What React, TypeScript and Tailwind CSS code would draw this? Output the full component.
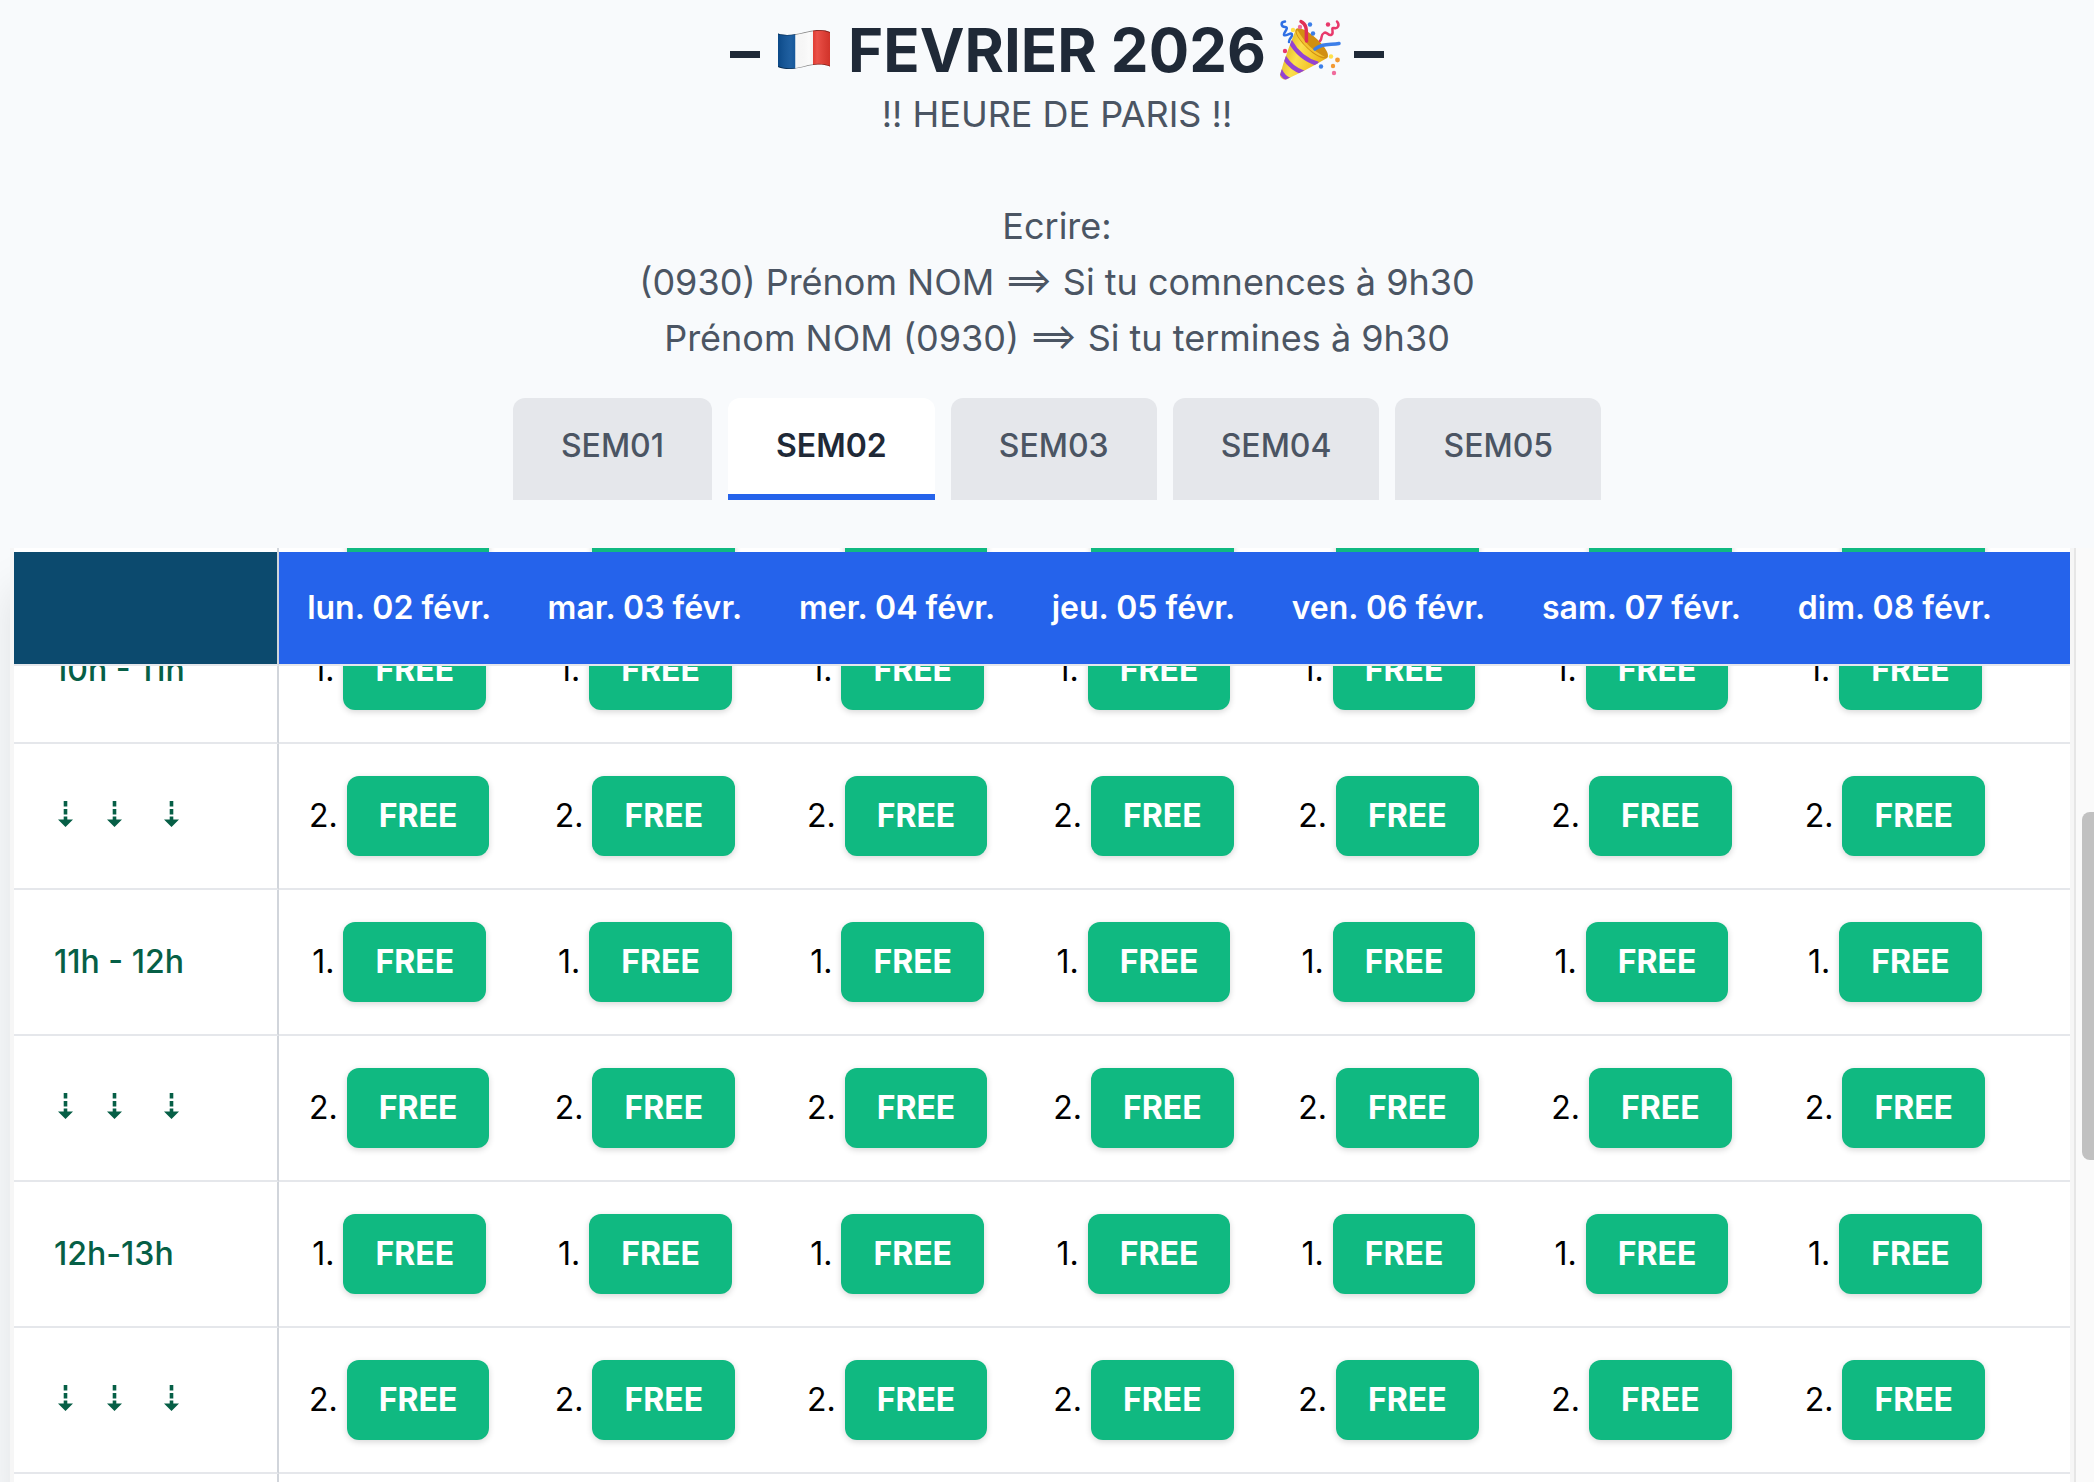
import React, { useLayoutEffect, useRef, useState } from 'react';
import { clsx } from 'clsx';

const WEEKS = ['SEM01', 'SEM02', 'SEM03', 'SEM04', 'SEM05'];

const DAYS = [
    'lun. 02 févr.',
    'mar. 03 févr.',
    'mer. 04 févr.',
    'jeu. 05 févr.',
    'ven. 06 févr.',
    'sam. 07 févr.',
    'dim. 08 févr.',
];

// A slot without a label is the second place of the hour above it
const SLOTS = [
    { place: 2 },
    { label: '10h - 11h', place: 1 },
    { place: 2 },
    { label: '11h - 12h', place: 1 },
    { place: 2 },
    { label: '12h-13h', place: 1 },
    { place: 2 },
    { label: '13h - 14h', place: 1 },
];

const START_SCROLL = 210;

const FrenchFlag: React.FC = () => (
    <svg viewBox="-2 0 56 40" className="h-10 w-14" role="img" aria-label="France">
        <defs>
            <clipPath id="flag">
                <path d="M0 3.5C6 5.5 12 5 18 4C27 2.5 33 0 42 0C46 0 49 .8 52 2V36.5C48 35 44 34.5 40 34.6C31 35 24 38 16 38.8C10 39.4 5 39 0 37Z" />
            </clipPath>
            <linearGradient id="wave" x1="0" x2="1">
                <stop offset="0" stopColor="#000" stopOpacity=".12" />
                <stop offset=".25" stopColor="#fff" stopOpacity=".08" />
                <stop offset=".6" stopColor="#000" stopOpacity="0" />
                <stop offset=".75" stopColor="#fff" stopOpacity=".12" />
                <stop offset="1" stopColor="#000" stopOpacity=".1" />
            </linearGradient>
        </defs>
        <g clipPath="url(#flag)">
            <path fill="#0c5299" d="M0 0h17.5v40H0z" />
            <path fill="#fbfbfb" d="M17.5 0H35v40H17.5z" />
            <path fill="#e8392f" d="M35 0h17v40H35z" />
            <path fill="url(#wave)" d="M0 0h52v40H0z" />
            <path
                fill="none"
                stroke="#000"
                strokeOpacity=".45"
                strokeWidth="1.5"
                d="M0 3.5C6 5.5 12 5 18 4C27 2.5 33 0 42 0C46 0 49 .8 52 2M52 36.5C48 35 44 34.5 40 34.6C31 35 24 38 16 38.8C10 39.4 5 39 0 37"
            />
        </g>
    </svg>
);

const PartyPopper: React.FC = () => (
    <svg viewBox="-2 0 60 60" className="size-[60px] overflow-visible" role="img" aria-label="Fête">
        <defs>
            <linearGradient id="cone" x1="0" y1=".3" x2="1" y2=".7">
                <stop offset="0" stopColor="#d9a514" />
                <stop offset=".35" stopColor="#fbe04e" />
                <stop offset=".7" stopColor="#eeb91c" />
                <stop offset="1" stopColor="#b67a10" />
            </linearGradient>
            <clipPath id="coneBody">
                <path d="M16 9C10 24 4 40 0 55C0 58 3 60 6 59.5C20 53 34 46 47 38C50 34 40 23 32 16C25 10 18 7 16 9Z" />
            </clipPath>
        </defs>
        <g clipPath="url(#coneBody)">
            <path fill="url(#cone)" d="M0 0h60v60H0z" />
            <path fill="none" stroke="#9443d2" strokeWidth="4.5" d="M10 21C16 32 25 40 38 44M4 37C9 45 15 50 24 53M0 50C2 55 5 58 10 60" />
        </g>
        <path fill="#d18f12" d="M16 9C20 6 30 12 38 20C46 28 50 35 47 38C42 40 32 34 25 26C18 19 14 12 16 9Z" />
        <path fill="#f3c331" d="M17 10C15 13 20 20 27 27C33 33 40 37 45 37C38 33 30 28 25 21C21 16 19 12 17 10Z" />
        <g fill="none" strokeLinecap="round">
            <path stroke="#e02e55" strokeWidth="3.5" d="M21 1.5C28 5 26 12 26.5 21" />
            <path stroke="#3c7ee8" strokeWidth="3.5" d="M35 29C42 23 50 25 59 23.5" />
            <path stroke="#2f6fe4" strokeWidth="2.5" d="M5 1.5C0 2 1 7 5 7C10 7 3 13 4 15C6 17 12 11 12 15C12 18 9 18 9 22" />
            <path stroke="#e8396b" strokeWidth="2.5" d="M57 1.5C60 5 58 9 54 8C50 7 55 14 51 15C48 16 47 11 44 13C40 15 43 18 40 21" />
        </g>
        <circle cx="30" cy="4.5" r="2.2" fill="#3c7ee8" />
        <circle cx="33" cy="13.5" r="2.2" fill="#3c7ee8" />
        <circle cx="20" cy="7" r="2.2" fill="#f06b9c" />
        <circle cx="13" cy="10" r="2.2" fill="#ffe14a" />
        <circle cx="48" cy="4.5" r="2.2" fill="#e8396b" />
        <circle cx="5" cy="31" r="2.2" fill="#e8396b" />
        <circle cx="41" cy="46.5" r="2.2" fill="#3c7ee8" />
        <circle cx="51" cy="36.5" r="2.2" fill="#ffe14a" />
        <circle cx="57.5" cy="40" r="2.4" fill="#f39a34" />
        <circle cx="53" cy="46" r="2.2" fill="#f39a34" />
        <circle cx="54" cy="53" r="2.2" fill="#f06b9c" />
    </svg>
);

const DownArrow: React.FC = () => (
    <svg viewBox="-4 0 23 26" className="inline h-[26px] w-[23px] align-baseline" fill="currentColor" aria-hidden="true">
        <path d="M5.7 0h3.600v5.500H5.700zM5.700 8h3.600v5.500H5.700zM5.700 15.500h3.600v3H15L7.500 26L0 18.500h5.700z" />
    </svg>
);

const SameHour: React.FC = () => (
    <>
        <DownArrow />
        {'\u00a0\u00a0\u00a0'}
        <DownArrow />
        {'\u00a0\u00a0\u00a0\u00a0'}
        <DownArrow />
    </>
);

export default function App() {
    const [week, setWeek] = useState('SEM02');
    const scroller = useRef<HTMLDivElement>(null);

    useLayoutEffect(() => {
        if (scroller.current) scroller.current.scrollTop = START_SCROLL;
    }, [week]);

    return (
        <div className="flex h-screen flex-col overflow-hidden bg-[#f8fafc] font-[Inter,sans-serif] text-[32px] leading-[48px] text-black">
            <header className="pt-[14px] pl-5 text-center">
                <h1 className="flex items-center justify-center gap-4 text-[60px] leading-[72px] font-bold text-[#1f2937]">
                    <span>–</span>
                    <FrenchFlag />
                    <span className="flex items-center gap-3">
                        FEVRIER 2026
                        <PartyPopper />
                    </span>
                    <span>–</span>
                </h1>
                <div className="text-[36px] leading-[56px] text-[#4b5563]">
                    <p>!! HEURE DE PARIS !!</p>
                    <p className="mt-14">Ecrire:</p>
                    <p>{'(0930) Prénom NOM ==> Si tu comnences à 9h30'}</p>
                    <p>{'Prénom NOM (0930) ==> Si tu termines à 9h30'}</p>
                </div>
                <nav className="mt-8 flex justify-center gap-4">
                    {WEEKS.map(name => (
                        <button
                            key={name}
                            onClick={() => setWeek(name)}
                            className={clsx(
                                'rounded-t-xl border-b-[6px] px-12 py-6',
                                name === week
                                    ? 'border-[#2563eb] bg-white font-semibold text-[#1f2937]'
                                    : 'border-[#e5e7eb] bg-[#e5e7eb] font-medium text-[#4b5563]'
                            )}
                        >
                            {name}
                        </button>
                    ))}
                </nav>
            </header>

            <main className="relative mt-12 flex min-h-0 flex-1 overflow-hidden pl-[10px]">
                <div
                    ref={scroller}
                    className="flex-1 overflow-x-hidden overflow-y-auto border-x-4 border-[#f6f6f6] bg-white shadow-[0_40px_40px_rgba(0,0,0,0.1)] [scrollbar-width:none]"
                >
                    <table className="w-full border-separate border-spacing-0">
                        <thead>
                            <tr>
                                <th className="sticky top-1 w-[265px] border-r-2 border-b-2 border-r-[#d1d5db] border-b-[#e5e7eb] bg-[#0c4a6e]" />
                                {DAYS.map(day => (
                                    <th
                                        key={day}
                                        className="sticky top-1 border-b-2 border-[#e5e7eb] bg-[#2563eb] px-6 py-8 font-semibold whitespace-nowrap text-white"
                                    >
                                        {day}
                                    </th>
                                ))}
                                <th className="sticky top-1 border-b-2 border-[#e5e7eb] bg-[#2563eb] px-6" />
                            </tr>
                        </thead>
                        <tbody>
                            {SLOTS.map((slot, i) => (
                                <tr key={i}>
                                    <th className="border-r-2 border-b-2 border-r-[#d1d5db] border-b-[#e5e7eb] px-10 text-left font-medium whitespace-nowrap text-[#065f46]">
                                        {slot.label ?? <SameHour />}
                                    </th>
                                    {DAYS.map(day => (
                                        <td key={day} className="border-b-2 border-[#e5e7eb] px-6 py-8 text-center whitespace-nowrap">
                                            {slot.place}.{' '}
                                            <button className="rounded-xl bg-[#10b981] px-8 py-4 font-bold text-white shadow-[0_2px_6px_rgba(0,0,0,0.16)]">
                                                FREE
                                            </button>
                                        </td>
                                    ))}
                                    <td className="border-b-2 border-[#e5e7eb] px-6" />
                                </tr>
                            ))}
                        </tbody>
                    </table>
                </div>

                {/* Scrollbar gutter */}
                <div className="relative w-5 border-l-2 border-[#e6e6e6] bg-[#fafafa]">
                    <div className="absolute top-[264px] right-0 h-[348px] w-3 rounded-l-lg bg-[#c1c1c1]" />
                </div>
            </main>
        </div>
    );
}
